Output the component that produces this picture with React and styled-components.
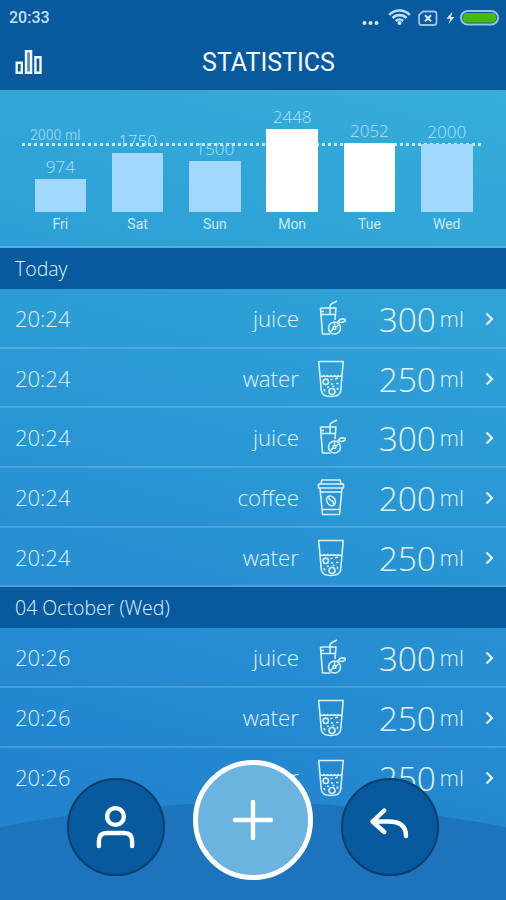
import React from 'react';
import styled, { createGlobalStyle } from 'styled-components';

const days = [
  { day: 'Fri', value: 974 },
  { day: 'Sat', value: 1750 },
  { day: 'Sun', value: 1500 },
  { day: 'Mon', value: 2448 },
  { day: 'Tue', value: 2052 },
  { day: 'Wed', value: 2000 },
];

const sections = [
  {
    title: 'Today',
    entries: [
      { time: '20:24', drink: 'juice', amount: 300 },
      { time: '20:24', drink: 'water', amount: 250 },
      { time: '20:24', drink: 'juice', amount: 300 },
      { time: '20:24', drink: 'coffee', amount: 200 },
      { time: '20:24', drink: 'water', amount: 250 },
    ],
  },
  {
    title: '04 October (Wed)',
    entries: [
      { time: '20:26', drink: 'juice', amount: 300 },
      { time: '20:26', drink: 'water', amount: 250 },
      { time: '20:26', drink: 'water', amount: 250 },
    ],
  },
];

const JuiceIcon = () => (
  <DrinkSvg viewBox="0 0 30 40">
    <path d="M4.500 9h15.500l-1 12M4.500 9l2 26h8M5 15.500h14.500M5 12.500h3" />
    <path d="M14 15V7.500q0-2 2-3L21 2" />
    <circle cx="18.500" cy="29" r="6" />
    <circle cx="18.500" cy="29" r="1.500" />
    <path d="M18.500 27.500v-4M20 28l2.500-2M17 30l-2.500 2.500" />
    <path d="M22 22.500q3-4.500 8-1.500q-3 4-8 1.500z" />
  </DrinkSvg>
);

const WaterIcon = () => (
  <DrinkSvg viewBox="0 0 30 40">
    <path d="M2.700 2.500h24.500l-2.500 29q-.5 6-9.700 6t-9.700-6z" />
    <path d="M4.500 16.500q2 2 3.500 0q1.800 2 3.500 0q1.800 2 3.500 0q1.800 2 3.500 0q1.800 2 3.500 0q1.800 2 3.500 0" />
    <circle cx="9.800" cy="22.800" r="2.700" />
    <circle cx="16" cy="32.500" r="3" />
    <path d="M14.500 20.500h2M19 20l3-1M15 24.500l2 1M20 24.500h2.500M11 28.500l2-.5M16.500 27.500h2M21.500 28.500v2.500M8 30l1 2.500" />
  </DrinkSvg>
);

const CoffeeIcon = () => (
  <DrinkSvg viewBox="0 0 30 40">
    <path d="M5 6l.8-4h18.400L25 6M2.500 6h25v4h-25zM4 10l2.500 26.500h17L26 10" />
    <path d="M4.500 14h21M6.200 31.500h17.600" />
    <ellipse cx="15" cy="22.800" rx="4" ry="5.200" transform="rotate(-35 15 22.800)" />
    <path d="M12.500 19.300q1 3 3 3.500t2.300 3.500" />
  </DrinkSvg>
);

const icons = { juice: JuiceIcon, water: WaterIcon, coffee: CoffeeIcon };

const StatusIcons = () => (
  <svg width="140" height="24" viewBox="0 0 140 24" fill="none">
    <g fill="#d7e6f8">
      <circle cx="4.500" cy="17" r="2" />
      <circle cx="10.500" cy="17" r="2" />
      <circle cx="16.500" cy="17" r="2" />
      <circle cx="39.500" cy="17" r="2" />
    </g>
    <g stroke="#c3dbf3" strokeWidth="2.600">
      <path d="M29.200 8.800a14.500 14.500 0 0 1 20.600 0M32.500 12a10 10 0 0 1 14 0M35.800 15a5.300 5.300 0 0 1 7.400 0" />
    </g>
    <path d="M63 5.500h11q2.500 0 2.500 2.500v8.500q0 2.500-2.500 2.500h-12.500q-2.500 0-2.500-2.500V9z" stroke="#9cc0e6" strokeWidth="1.800" />
    <path d="M65 9.300l6 6M71 9.300l-6 6" stroke="#d7e6f8" strokeWidth="2" />
    <path d="M92.500 5.500l-6 7.200h3.700L88.500 18l6-7h-3.500z" fill="#d7e6f8" />
    <rect x="101" y="5" width="37" height="13.500" rx="6.700" stroke="#9cc0e6" strokeWidth="2" />
    <rect x="103" y="7" width="33" height="9.500" rx="4" fill="#46bb0a" />
  </svg>
);

const Chart = () => (
  <ChartPanel>
    <GoalLabel>2000 ml</GoalLabel>
    <GoalLine viewBox="0 0 462 3">
      <line x1="0" y1="1.500" x2="462" y2="1.500" />
    </GoalLine>
    <Bars>
      {days.map(({ day, value }) => (
        <BarColumn key={day}>
          <BarValue>{value}</BarValue>
          <Bar $reached={value > 2000} style={{ height: value / 29.7 }} />
          <BarDay>{day}</BarDay>
        </BarColumn>
      ))}
    </Bars>
  </ChartPanel>
);

const Entry = ({ time, drink, amount }) => {
  const Icon = icons[drink];

  return (
    <Row>
      <Time>{time}</Time>
      <Drink>{drink}</Drink>
      <Icon />
      <Amount>{amount}</Amount>
      <Unit>ml</Unit>
      <Chevron viewBox="0 0 9 14">
        <path d="M1.500 1.500L7 7l-5.500 5.500" />
      </Chevron>
    </Row>
  );
};

const App = () => {
  return (
    <Screen>
      <GlobalStyle />
      <Header>
        <StatusBar>
          <Clock>20:33</Clock>
          <StatusIcons />
        </StatusBar>
        <TitleBar>
          <svg width="28" height="26" viewBox="0 0 28 26" fill="none" stroke="#f2f7ff" strokeWidth="2.400">
            <path d="M1.700 13.700h5.100v10.100H1.700z" />
            <path d="M11 2.200h5.100v21.600H11z" fill="#5a86bd" />
            <path d="M20.400 8.200h5.100v15.600h-5.100z" />
          </svg>
          <Title>STATISTICS</Title>
        </TitleBar>
      </Header>
      <Chart />
      {sections.map(({ title, entries }) => (
        <section key={title}>
          <SectionTitle>{title}</SectionTitle>
          {entries.map((entry, i) => (
            <Entry key={i} {...entry} />
          ))}
        </section>
      ))}
      <Wave viewBox="0 0 506 98">
        <path d="M0 25A1345 1345 0 0 1 506 25V98H0z" />
      </Wave>
      <Actions>
        <RoundButton aria-label="Profile">
          <svg width="42" height="46" viewBox="0 0 42 46">
            <circle cx="20.500" cy="12.500" r="8.400" />
            <path d="M3.900 42V37q0-8 8-8h17.200q8 0 8 8v5" />
          </svg>
        </RoundButton>
        <RoundButton $primary aria-label="Add">
          <svg width="42" height="42" viewBox="0 0 42 42">
            <path d="M21 3v36M3 21h36" />
          </svg>
        </RoundButton>
        <RoundButton aria-label="Back">
          <svg width="42" height="46" viewBox="0 0 42 46">
            <path d="M15.300 6.500L3.500 17.500l11.800 10.500M4.500 17.500h15q17.500 0 17.500 14.500" />
          </svg>
        </RoundButton>
      </Actions>
    </Screen>
  );
};

export default App;



const GlobalStyle = createGlobalStyle`
  * {
    box-sizing: border-box;
  }
  body {
    margin: 0;
    overflow: hidden;
  }
`

const Screen = styled.main`
  position: relative;
  width: 506px;
  height: 900px;
  overflow: hidden;
  color: #e0f3ff;
  font-family: 'Open Sans', sans-serif;
  font-weight: 300;
  background: linear-gradient(195deg, #36aed9 8%, #2c9dd6 40%, #2283cf 88%);

  section:last-of-type > div:last-child {
    border-bottom-color: transparent;
  }
`

const Header = styled.header`
  height: 91px;
  background: #075a9e;
  border-bottom: 1px solid #4f9fd0;
  font-family: Roboto, sans-serif;
`

const StatusBar = styled.div`
  display: flex;
  justify-content: space-between;
  height: 36px;
  padding: 6px 6px 0 9px;
`

const Clock = styled.span`
  font-size: 16px;
  font-weight: 500;
  line-height: 24px;
  color: #c9def5;
`

const TitleBar = styled.div`
  display: grid;
  grid-template-columns: 60px 1fr 60px;
  align-items: center;
  height: 52px;
  padding-left: 15px;
`

const Title = styled.h1`
  margin: 0;
  padding-left: 16px;
  text-align: center;
  font-size: 25px;
  font-weight: 400;
  color: #f4f9ff;
`

const ChartPanel = styled.div`
  position: relative;
  height: 157px;
  border-bottom: 2px solid #54aedb;
`

/* bars stand in front of the goal line */
const Bars = styled.div`
  position: relative;
  display: flex;
  align-items: flex-end;
  gap: 25.7px;
  height: 144.6px;
  padding-left: 34.5px;
`

const BarColumn = styled.div`
  display: flex;
  flex-direction: column;
  align-items: center;
  width: 51.6px;
`

const BarValue = styled.span`
  font-size: 17px;
  line-height: 24px;
  color: #b4e2fc;
`

const Bar = styled.div`
  width: 100%;
  background: ${({ $reached }) => ($reached ? '#fff' : '#a3d8fe')};
`

const BarDay = styled.span`
  height: 24px;
  font-family: Roboto, sans-serif;
  font-size: 14px;
  font-weight: 400;
  line-height: 24px;
  color: #c8ebff;
`

const GoalLabel = styled.span`
  position: absolute;
  left: 30px;
  top: 35px;
  font-family: Roboto, sans-serif;
  font-size: 14px;
  font-weight: 400;
  line-height: 18px;
  color: #8fcbe8;
`

const GoalLine = styled.svg`
  position: absolute;
  left: 22px;
  top: 52px;
  width: 462px;
  height: 3px;
  stroke: #c4ecfa;
  stroke-width: 3;
  stroke-dasharray: 3 3;
`

const SectionTitle = styled.h2`
  height: 41px;
  margin: 0;
  padding-left: 15px;
  background: #075a9e;
  font-size: 19.5px;
  font-weight: 300;
  line-height: 42px;
`

const Row = styled.div`
  display: grid;
  grid-template-columns: 100px 184px 47px 90px 28px 1fr;
  align-items: center;
  height: 59.7px;
  padding: 0 12px 0 15px;
  border-bottom: 2px solid rgba(255, 255, 255, 0.16);
`

const Time = styled.span`
  font-size: 22px;
  line-height: 30px;
`

const Drink = styled.span`
  margin-top: 2px;
  text-align: right;
  font-size: 22.3px;
  line-height: 30px;
`

const DrinkSvg = styled.svg`
  width: 30px;
  height: 40px;
  margin: 2px 0 0 17px;
  fill: none;
  stroke: #d9f1fe;
  stroke-width: 1.6;
  stroke-linejoin: round;
`

const Amount = styled.span`
  margin-top: 2px;
  text-align: right;
  font-size: 33.5px;
`

const Unit = styled.span`
  text-align: right;
  font-size: 22px;
  line-height: 30px;
`

const Chevron = styled.svg`
  width: 9px;
  height: 14px;
  margin-top: 2px;
  justify-self: end;
  fill: none;
  stroke: #e4f5ff;
  stroke-width: 2.2;
`

const Wave = styled.svg`
  position: absolute;
  left: 0;
  bottom: 0;
  width: 506px;
  height: 98px;
  fill: #1d74bc;
`

const Actions = styled.nav`
  position: absolute;
  left: 67px;
  bottom: 20px;
  display: flex;
  align-items: center;
  gap: 28px;
`

const RoundButton = styled.button`
  display: flex;
  align-items: center;
  justify-content: center;
  width: ${({ $primary }) => ($primary ? '120px' : '98px')};
  height: ${({ $primary }) => ($primary ? '120px' : '98px')};
  margin-top: ${({ $primary }) => ($primary ? '0' : '13px')};
  padding: 0;
  border: ${({ $primary }) => ($primary ? '5px solid #fff' : '2px solid #083e6b')};
  border-radius: 50%;
  background: ${({ $primary }) => ($primary ? '#6bb4e0' : '#075a9e')};

  svg {
    fill: none;
    stroke: #fff;
    stroke-width: 4.4;
    stroke-linecap: round;
    stroke-linejoin: round;
  }
`
